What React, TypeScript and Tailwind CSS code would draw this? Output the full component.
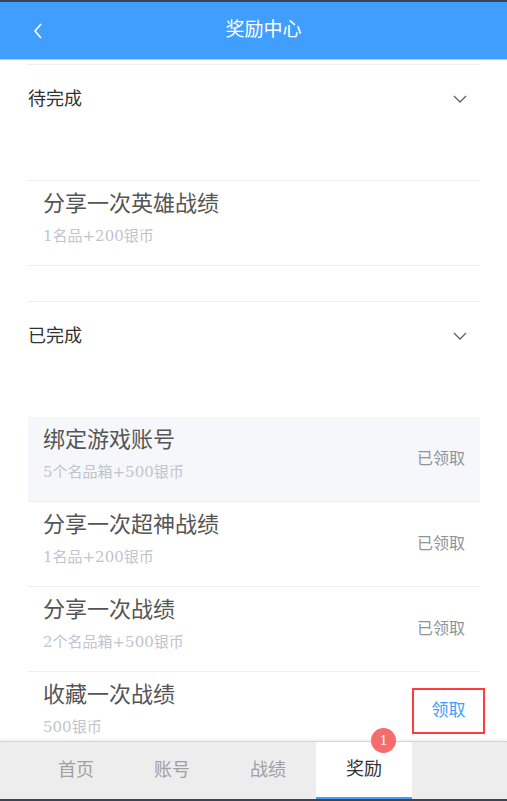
import React from "react";

const FONT = { fontFamily: '"Liberation Serif", "Noto Sans CJK SC", serif' };
const SUBFONT = { fontFamily: '"DejaVu Serif", "Noto Sans CJK SC", serif' };

function Chevron() {
  return (
    <svg width="14" height="8" viewBox="0 0 14 8" fill="none">
      <path d="M1 1 L7 7 L13 1" stroke="#606266" strokeWidth="1.3" />
    </svg>
  );
}

type Item = { title: string; sub: string; status?: "done" | "claim"; grey?: boolean };

function Row({ item, last }: { item: Item; last?: boolean }) {
  return (
    <div
      className={`relative flex items-center h-[85px] pl-[15px] pr-[15px] ${last ? "" : "border-b border-[#ebeef5]"} ${item.grey ? "bg-[#f5f7fa]" : "bg-white"}`}
    >
      <div className="flex-1 flex flex-col self-start pt-[8px]">
        <div className="text-[22px] leading-[30px] text-[#555]">{item.title}</div>
        <div className="mt-[7px] text-[15px] leading-[20px] text-[#c0c4cc]" style={SUBFONT}>
          {item.sub}
        </div>
      </div>
      {item.status === "done" && (
        <div className="text-[16px] text-[#909399]">已领取</div>
      )}
      {item.status === "claim" && (
        <div className="absolute right-[-5px] top-[16px] w-[73px] h-[46px] border-2 border-[#ff3b3b] flex items-center justify-center">
          <span className="text-[17px] text-[#409eff]">领取</span>
        </div>
      )}
    </div>
  );
}

function SectionHeader({ label }: { label: string }) {
  return (
    <div className="h-[68px] flex items-center justify-between pr-[13px]">
      <span className="text-[18px] text-[#303133]">{label}</span>
      <Chevron />
    </div>
  );
}

export default function App() {
  const done: Item[] = [
    { title: "绑定游戏账号", sub: "5个名品箱+500银币", status: "done", grey: true },
    { title: "分享一次超神战绩", sub: "1名品+200银币", status: "done" },
    { title: "分享一次战绩", sub: "2个名品箱+500银币", status: "done" },
    { title: "收藏一次战绩", sub: "500银币", status: "claim" },
  ];
  const tabs = ["首页", "账号", "战绩", "奖励"];
  return (
    <div className="w-[507px] h-[801px] flex flex-col overflow-hidden bg-white" style={FONT}>
      <div className="h-[2px] bg-[#3b4453] shrink-0" />
      <div className="h-[58px] shrink-0 bg-[#409eff] border-b border-[#a8d1ff] relative flex items-center justify-center pl-[20px]">
        <svg className="absolute left-[32px] top-[20px]" width="12" height="18" viewBox="0 0 12 18" fill="none">
          <path d="M9 2 L3 9 L9 16" stroke="white" strokeWidth="1.6" />
        </svg>
        <span className="text-[19px] text-white">奖励中心</span>
      </div>
      <div className="flex-1 overflow-hidden pl-[28px] pr-[27px] pt-[4px]">
        <div className="border-t border-[#ebeef5]">
          <SectionHeader label="待完成" />
          <div className="h-[47px]" />
          <div className="border-t border-[#ebeef5]">
            <Row item={{ title: "分享一次英雄战绩", sub: "1名品+200银币" }} />
          </div>
        </div>
        <div className="h-[35px]" />
        <div className="border-t border-[#ebeef5]">
          <SectionHeader label="已完成" />
          <div className="h-[47px]" />
          {done.map((it, i) => (
            <Row key={i} item={it} last={i === done.length - 1} />
          ))}
        </div>
      </div>
      <div className="h-[58px] shrink-0 bg-[#ededed] border-t border-[#d4d4d4] shadow-[0_-1px_3px_rgba(0,0,0,0.08)] flex pl-[28px] relative z-10">
        {tabs.map((t, i) => {
          const active = i === 3;
          return (
            <div
              key={t}
              className={`relative w-[96px] flex items-center justify-center text-[18px] ${active ? "bg-white text-[#333] border-b-2 border-[#409eff]" : "text-[#a0a0a0]"}`}
            >
              {t}
              {active && (
                <div className="absolute left-[55px] top-[-14px] w-[25px] h-[25px] rounded-full bg-[#f56c6c] text-white text-[15px] flex items-center justify-center">
                  1
                </div>
              )}
            </div>
          );
        })}
      </div>
      <div className="h-[2px] bg-[#3b4453] shrink-0" />
    </div>
  );
}
